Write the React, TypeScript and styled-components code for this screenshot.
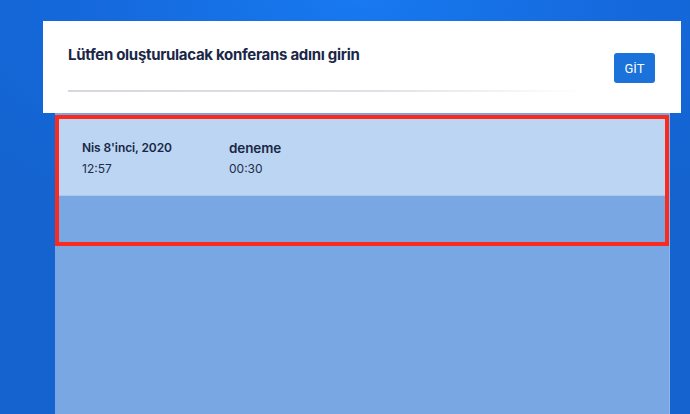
import React from 'react'
import styled, { createGlobalStyle } from 'styled-components'

const GlobalStyle = createGlobalStyle`
  html, body {
    margin: 0;
    padding: 0;
  }
  body {
    font-family: Inter, 'Noto Sans', sans-serif;
    color: #1b2947;
  }
`

const Page = styled.div`
  height: 414px;
  overflow: hidden;
  display: flex;
  flex-direction: column;
  background: radial-gradient(ellipse 70% 60% at 52% 0%, #1879f0 0%, #1569dc 55%, #1463cf 100%);
`

const Card = styled.div`
  margin: 21px 0 0 43px;
  width: 638px;
  height: 92px;
  box-sizing: border-box;
  background: #ffffff;
  padding: 24px 26px 0 25px;
  display: flex;
  align-items: flex-start;
  position: relative;
  z-index: 1;
`

const Field = styled.div`
  flex: 1;
  display: flex;
  flex-direction: column;
`

const Title = styled.h2`
  margin: 0;
  font-size: 15px;
  font-weight: 700;
  line-height: 20px;
  letter-spacing: -0.3px;
  color: #1a2746;
`

const Underline = styled.div`
  margin-top: 25px;
  width: 516px;
  height: 2px;
  background: linear-gradient(90deg, #d6d8df 0%, #dfe1e6 60%, rgba(240, 241, 244, 0) 100%);
`

const GoButton = styled.button`
  margin-top: 8px;
  width: 41px;
  height: 30px;
  border: none;
  border-radius: 3px;
  background: #1a72da;
  color: #ffffff;
  font-family: Roboto, 'Noto Sans', sans-serif;
  font-size: 13px;
  font-weight: 400;
  padding: 0;
`

const Panel = styled.div`
  flex: 1;
  margin-left: 55px;
  width: 614px;
  background: #78a7e4;
  border-right: 1px solid #8fb6ec;
  padding-top: 2px;
`

const Highlight = styled.div`
  height: 131px;
  box-sizing: border-box;
  border: 4px solid #fb2a1e;
`

const Row = styled.div`
  height: 77px;
  box-sizing: border-box;
  background: #bbd5f2;
  border-bottom: 1px solid #a9c8ef;
  padding: 21px 0 0 23px;
  display: flex;
`

const Cell = styled.div<{ width?: number }>`
  width: ${(p) => (p.width ? `${p.width}px` : 'auto')};
  display: flex;
  flex-direction: column;
  gap: 5px;
`

const Primary = styled.div<{ large?: boolean }>`
  font-size: ${(p) => (p.large ? '13.5px' : '12px')};
  font-weight: 600;
  line-height: 16px;
  letter-spacing: -0.1px;
  color: #1a2746;
`

const Secondary = styled.div`
  font-size: 12px;
  line-height: 16px;
  color: #1f2c4b;
`

export default function App() {
  return (
    <>
      <GlobalStyle />
      <Page>
        <Card>
          <Field>
            <Title>Lütfen oluşturulacak konferans adını girin</Title>
            <Underline />
          </Field>
          <GoButton>GİT</GoButton>
        </Card>
        <Panel>
          <Highlight>
            <Row>
              <Cell width={147}>
                <Primary>Nis 8'inci, 2020</Primary>
                <Secondary>12:57</Secondary>
              </Cell>
              <Cell>
                <Primary large>deneme</Primary>
                <Secondary>00:30</Secondary>
              </Cell>
            </Row>
          </Highlight>
        </Panel>
      </Page>
    </>
  )
}
